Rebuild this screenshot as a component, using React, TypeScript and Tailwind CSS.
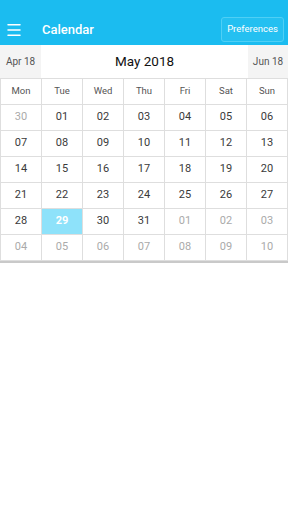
import { Menu } from "lucide-react";

const weekdays = ["Mon", "Tue", "Wed", "Thu", "Fri", "Sat", "Sun"];

type Day = { label: string; muted?: boolean; today?: boolean };

const rows: Day[][] = [
  [{ label: "30", muted: true }, { label: "01" }, { label: "02" }, { label: "03" }, { label: "04" }, { label: "05" }, { label: "06" }],
  [{ label: "07" }, { label: "08" }, { label: "09" }, { label: "10" }, { label: "11" }, { label: "12" }, { label: "13" }],
  [{ label: "14" }, { label: "15" }, { label: "16" }, { label: "17" }, { label: "18" }, { label: "19" }, { label: "20" }],
  [{ label: "21" }, { label: "22" }, { label: "23" }, { label: "24" }, { label: "25" }, { label: "26" }, { label: "27" }],
  [{ label: "28" }, { label: "29", today: true }, { label: "30" }, { label: "31" }, { label: "01", muted: true }, { label: "02", muted: true }, { label: "03", muted: true }],
  [{ label: "04", muted: true }, { label: "05", muted: true }, { label: "06", muted: true }, { label: "07", muted: true }, { label: "08", muted: true }, { label: "09", muted: true }, { label: "10", muted: true }],
];

export default function App() {
  return (
    <div className="flex h-[512px] w-[288px] flex-col bg-white font-['Roboto',sans-serif]">
      <header className="flex h-[45px] items-center bg-[#1bbcf0] pl-[5px] pr-[4px] pt-[14px]">
        <Menu className="h-[18px] w-[18px] text-white" strokeWidth={2} />
        <span className="ml-[19px] text-[13px] font-medium text-white">Calendar</span>
        <button
          type="button"
          className="ml-auto h-[25px] w-[63px] rounded-[3px] border border-[#4fcff5] bg-[#24c0f1] text-[9.5px] text-white"
        >
          Preferences
        </button>
      </header>

      <div className="flex h-[33px] items-stretch">
        <button type="button" className="w-[41px] bg-[#f4f4f4] text-[10px] text-[#555]">
          Apr 18
        </button>
        <div className="flex flex-1 items-center justify-center text-[13.5px] text-[#111]">May 2018</div>
        <button type="button" className="w-[40px] bg-[#f4f4f4] text-[10px] text-[#555]">
          Jun 18
        </button>
      </div>

      <div className="border-b-2 border-[#c9c9c9]">
        <div className="grid h-[27px] grid-cols-7 border-t border-l border-[#dedede]">
          {weekdays.map((d) => (
            <div
              key={d}
              className="flex items-center justify-center border-r border-b border-[#dedede] text-[9.5px] text-[#555]"
            >
              {d}
            </div>
          ))}
        </div>
        {rows.map((row, i) => (
          <div key={i} className="grid h-[26px] grid-cols-7 border-l border-[#dedede]">
            {row.map((day, j) => (
              <div
                key={j}
                className={`flex items-center justify-center border-r border-b border-[#dedede] text-[11px] ${
                  day.today
                    ? "bg-[#8ee2fa] font-bold text-white"
                    : day.muted
                      ? "text-[#aaa]"
                      : "text-[#3a3a3a]"
                }`}
              >
                {day.label}
              </div>
            ))}
          </div>
        ))}
      </div>
    </div>
  );
}
